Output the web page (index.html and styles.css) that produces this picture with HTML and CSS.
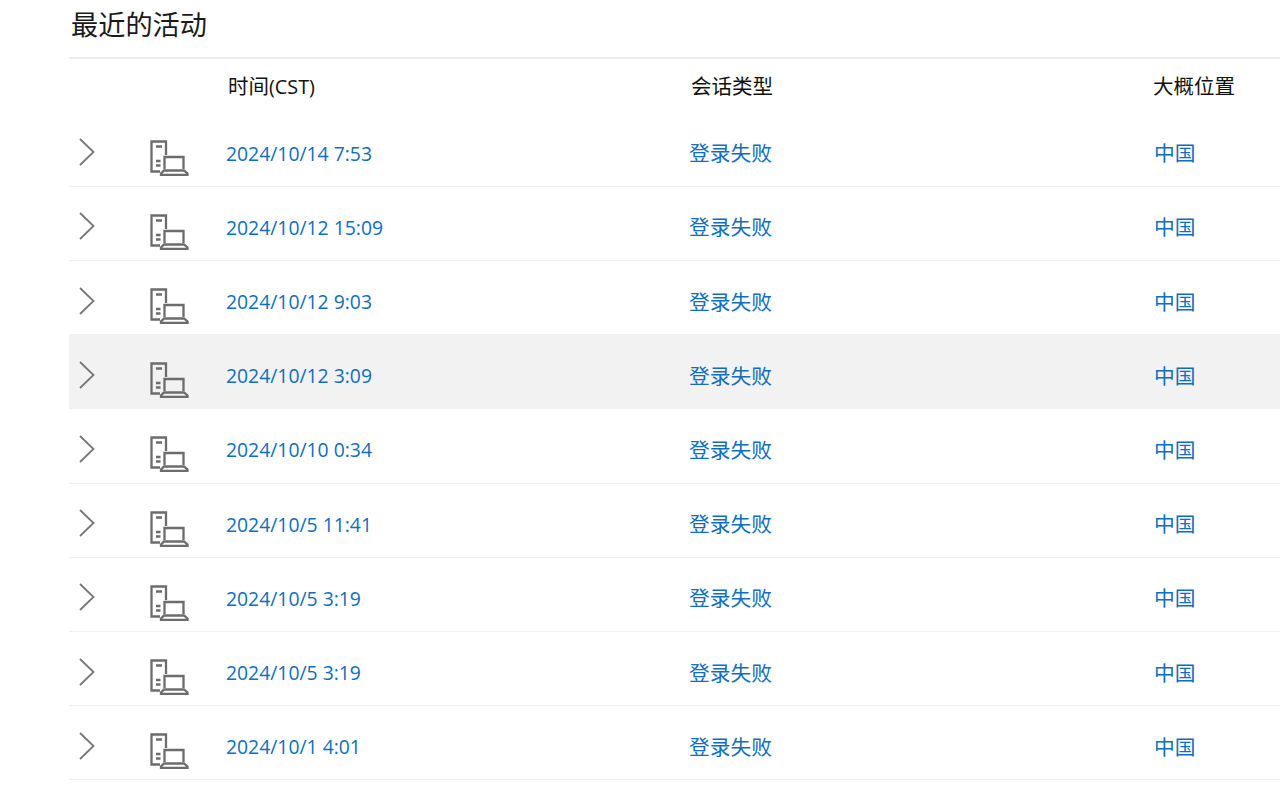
FILE: index.html
```html
<!DOCTYPE html>
<html lang="zh-CN">
<head>
<meta charset="utf-8">
<title>最近的活动</title>
<link rel="stylesheet" href="styles.css">
</head>
<body>
<svg class="defs" width="0" height="0" aria-hidden="true">
  <symbol id="chev" viewBox="0 0 18 28"><path d="M2 1l13.500 13L2 27" fill="none" stroke="#777" stroke-width="1.800"/></symbol>
  <symbol id="dev" viewBox="0 0 40 36">
    <g fill="none" stroke="#6c6c6c" stroke-width="2.300">
      <path d="M10 31.500H1.500V1.500H16V15"/>
      <path d="M6 6.500h6M6 21h4.500M6 25.500h4.500"/>
      <path d="M14.500 29V17h19v12"/>
      <path d="M14 30.500h20l3.500 3v1.500H11v-1.500z"/>
    </g>
  </symbol>
</svg>
<main class="panel">
  <h1 class="title">最近的活动</h1>
  <div class="row head">
    <span></span><span></span>
    <span class="c-time">时间<span class="latin">(CST)</span></span>
    <span class="c-type">会话类型</span>
    <span class="c-loc">大概位置</span>
  </div>
  <div class="row item"><svg class="chev"><use href="#chev"/></svg><svg class="dev"><use href="#dev"/></svg><a class="c-time">2024/10/14 7:53</a><a class="c-type">登录失败</a><a class="c-loc">中国</a></div>
  <div class="row item"><svg class="chev"><use href="#chev"/></svg><svg class="dev"><use href="#dev"/></svg><a class="c-time">2024/10/12 15:09</a><a class="c-type">登录失败</a><a class="c-loc">中国</a></div>
  <div class="row item"><svg class="chev"><use href="#chev"/></svg><svg class="dev"><use href="#dev"/></svg><a class="c-time">2024/10/12 9:03</a><a class="c-type">登录失败</a><a class="c-loc">中国</a></div>
  <div class="row item hover"><svg class="chev"><use href="#chev"/></svg><svg class="dev"><use href="#dev"/></svg><a class="c-time">2024/10/12 3:09</a><a class="c-type">登录失败</a><a class="c-loc">中国</a></div>
  <div class="row item"><svg class="chev"><use href="#chev"/></svg><svg class="dev"><use href="#dev"/></svg><a class="c-time">2024/10/10 0:34</a><a class="c-type">登录失败</a><a class="c-loc">中国</a></div>
  <div class="row item"><svg class="chev"><use href="#chev"/></svg><svg class="dev"><use href="#dev"/></svg><a class="c-time">2024/10/5 11:41</a><a class="c-type">登录失败</a><a class="c-loc">中国</a></div>
  <div class="row item"><svg class="chev"><use href="#chev"/></svg><svg class="dev"><use href="#dev"/></svg><a class="c-time">2024/10/5 3:19</a><a class="c-type">登录失败</a><a class="c-loc">中国</a></div>
  <div class="row item"><svg class="chev"><use href="#chev"/></svg><svg class="dev"><use href="#dev"/></svg><a class="c-time">2024/10/5 3:19</a><a class="c-type">登录失败</a><a class="c-loc">中国</a></div>
  <div class="row item"><svg class="chev"><use href="#chev"/></svg><svg class="dev"><use href="#dev"/></svg><a class="c-time">2024/10/1 4:01</a><a class="c-type">登录失败</a><a class="c-loc">中国</a></div>
</main>
</body>
</html>
```

FILE: styles.css
```css
html, body {
  margin: 0;
  padding: 0;
  background: #fff;
  overflow: hidden;
}
body {
  height: 786px;
  font-family: "Open Sans", "Noto Sans CJK SC", sans-serif;
  color: #000;
}
.defs {
  display: block;
  height: 0;
}
.panel {
  margin-left: 69px;
}
.title {
  margin: 0;
  box-sizing: border-box;
  border-bottom: 2px solid #ececec;
  height: 59px;
  padding: 6px 0 0 2px;
  font-size: 27.200px;
  line-height: 38px;
  font-weight: 400;
  color: #1a1a1a;
}
.row {
  display: grid;
  grid-template-columns: 81px 76px 463px 464px 1fr;
  align-items: center;
  font-size: 20.500px;
}
.head {
  height: 53.600px;
  color: #111;
}
.head .c-time, .head .c-type {
  margin-left: 2px;
  margin-top: -1px;
}
.head .c-loc {
  margin-top: -1px;
}
.latin {
  font-size: 19.800px;
}
.item {
  height: 74.200px;
  box-sizing: border-box;
  border-bottom: 1px solid #efefef;
  color: #106ebe;
}
.item .c-time {
  font-size: 19.350px;
  margin-top: 8px;
}
.item .c-type, .item .c-loc {
  font-size: 20.750px;
  margin-top: 6px;
}
.item .c-loc {
  margin-left: 1px;
}
.hover {
  background: #f2f2f2;
}
.chev {
  width: 18px;
  height: 28px;
  margin-left: 9px;
  margin-top: 6px;
}
.dev {
  width: 40px;
  height: 36px;
  margin-top: 17px;
}
```
